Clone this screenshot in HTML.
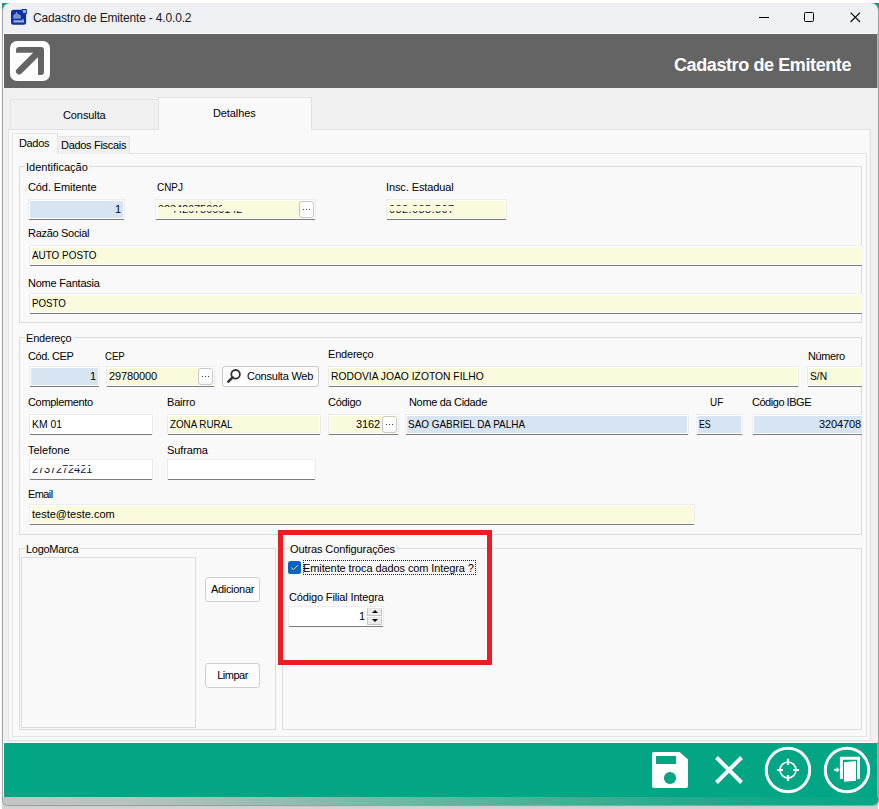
<!DOCTYPE html>
<html><head><meta charset="utf-8">
<style>
*{margin:0;padding:0;box-sizing:border-box}
html,body{width:879px;height:809px;overflow:hidden;background:#fff;font-family:"Liberation Sans",sans-serif;font-size:11px;color:#000;position:relative;letter-spacing:-0.1px}
.a{position:absolute}
.lbl{position:absolute;white-space:nowrap;font-size:11px;line-height:13px;color:#000}
.fld{position:absolute;height:19px;border:1px solid #fff;box-shadow:0 1px 0 #7d7d7d,0 0 0 1px #ececec;background:#fff;font-size:11px;line-height:17px;padding:0 2px 0 1px;white-space:nowrap;overflow:hidden}
.y{background:#fafadc}
.b{background:#d7e4f2}
.r{text-align:right}
.cr{border-right:none;box-shadow:0 1px 0 #7d7d7d,-1px 0 0 #ececec,0 -1px 0 #ececec}
.mk{position:absolute}
.grp{position:absolute;border:1px solid #dcdcdc}
.gl{position:absolute;background:#f9f9f9;padding:0 1px;line-height:13px;white-space:nowrap}
.dots{position:absolute;width:15px;height:17px;border:1px solid #c8c8c8;border-radius:3px;background:#fdfdfd}.dots::before{content:"";position:absolute;left:2.75px;top:6.75px;width:1.5px;height:1.5px;border-radius:0.5px;background:#000;box-shadow:3px 0 0 #000,6px 0 0 #000}
.btn{position:absolute;border:1px solid #d0d0d0;border-radius:3px;background:#fdfdfd;text-align:center;white-space:nowrap}
</style></head><body>
<!-- window -->
<div class="a" style="left:2px;top:3px;width:876px;height:806px;background:#d2d2d2"></div>
<div class="a" style="left:2px;top:3px;width:877px;height:802px;background:#f0f0f0;border-left:1px solid #a6a6a6;border-right:1px solid #a0a0a0;border-radius:0 0 6px 6px;box-shadow:0 1px 1px #9a9a9a"></div>
<!-- green corners -->
<div class="a" style="left:2px;top:3px;width:9px;height:9px;background:#159a78"></div>
<div class="a" style="left:870px;top:3px;width:9px;height:9px;background:#159a78"></div>
<!-- title bar -->
<div class="a" style="left:2px;top:3px;width:877px;height:31px;background:#eff0f3;border-radius:8px 8px 0 0;border-left:1px solid #a6a6a6;border-right:1px solid #a0a0a0"></div>
<svg class="a" style="left:10px;top:8px" width="18" height="18" viewBox="0 0 18 18">
 <rect x="1" y="1.8" width="15.1" height="15" rx="2.5" fill="#0b30a3"/>
 <rect x="11.9" y="1" width="5" height="5" rx="0.6" fill="#0b30a3"/>
 <rect x="12.9" y="2" width="3" height="3" fill="#9fb1e2"/>
 <path d="M3.2 10.8V7.6L5.6 5.6L6.6 3.4L7.6 5.6L10.8 7.6V10.8Z" fill="#7c90d0"/>
 <path d="M3.4 12.3H14V14.5H3.4Z" fill="#a2b3e3"/>
 <path d="M11.5 12.3L13 10.8L14 12.3" fill="#a2b3e3"/>
</svg>
<div class="lbl" style="left:33px;top:11px;font-size:12px;line-height:14px;letter-spacing:-0.17px;color:#1a1a1a">Cadastro de Emitente - 4.0.0.2</div>
<!-- window controls -->
<div class="a" style="left:759px;top:17px;width:10px;height:1px;background:#000"></div>
<div class="a" style="left:804px;top:12px;width:10px;height:10px;border:1px solid #000;border-radius:1.5px"></div>
<svg class="a" style="left:850px;top:12px" width="11" height="11" viewBox="0 0 11 11"><path d="M0.6 0.6L10 10M10 0.6L0.6 10" stroke="#000" stroke-width="1.1"/></svg>
<!-- dark header -->
<div class="a" style="left:3px;top:33px;width:874px;height:55px;background:#fff"></div>
<div class="a" style="left:877px;top:33px;width:1px;height:55px;background:#b4b4b4"></div>
<div class="a" style="left:4px;top:34px;width:873px;height:54px;background:#646464"></div>
<svg class="a" style="left:10px;top:41px" width="40" height="40" viewBox="0 0 40 40">
 <rect x="0" y="0" width="40" height="40" rx="7" fill="#fdfdfd"/>
 <path d="M9 6H31A3 3 0 0 1 34 9V31A3 3 0 0 1 31 34H28V11.7H6V9A3 3 0 0 1 9 6Z" fill="#646464"/>
 <path d="M29.6 9.9L9.2 30.3" stroke="#646464" stroke-width="6.5" fill="none" stroke-linecap="round"/>
</svg>
<div class="a" style="left:674px;top:55px;font-weight:bold;font-size:18px;line-height:20px;color:#fff;letter-spacing:-0.4px;white-space:nowrap">Cadastro de Emitente</div>

<!-- outer tabs -->
<div class="a" style="left:10px;top:99px;width:149px;height:31px;background:#f0f0f0;border:1px solid #e3e3e3;border-bottom:none"></div>
<div class="lbl" style="left:63px;top:109px">Consulta</div>
<div class="a" style="left:8px;top:129px;width:863px;height:612px;background:#f9f9f9;border:1px solid #e3e3e3;box-shadow:inset -1px 0 0 #f3f3f3"></div>
<div class="a" style="left:158px;top:97px;width:154px;height:33px;background:#f9f9f9;border:1px solid #e0e0e0;border-bottom:none"></div>
<div class="lbl" style="left:213px;top:107px">Detalhes</div>

<!-- inner tabs -->
<div class="a" style="left:12px;top:153px;width:855px;height:584px;background:#f9f9f9;border:1px solid #e4e4e4"></div>
<div class="a" style="left:57px;top:136px;width:73px;height:18px;background:#f0f0f0;border:1px solid #e3e3e3;border-bottom:none"></div>
<div class="lbl" style="left:61px;top:139px;letter-spacing:-0.3px">Dados Fiscais</div>
<div class="a" style="left:12px;top:133px;width:46px;height:21px;background:#f9f9f9;border:1px solid #e4e4e4;border-bottom:none"></div>
<div class="lbl" style="left:19px;top:137px;letter-spacing:-0.35px">Dados</div>

<!-- Identificacao group -->
<div class="grp" style="left:19px;top:166px;width:843px;height:157px"></div>
<div class="gl" style="left:25px;top:161px;letter-spacing:0px">Identificação</div>
<div class="lbl" style="left:28px;top:181px">Cód. Emitente</div>
<div class="fld b r" style="left:29px;top:200px;width:95px">1</div>
<div class="lbl" style="left:157px;top:181px;letter-spacing:0"><span style="display:inline-block;transform:scaleX(0.9);transform-origin:0 0">CNPJ</span></div>
<div class="fld y" style="left:156px;top:200px;width:159px;color:#10103a">02342675000142<i class="mk" style="left:0;top:6px;width:17px;height:10px;background:#fafadc"></i><i class="mk" style="left:0;top:6px;width:140px;height:4px;background:#fafadc"></i><i class="mk" style="left:65px;top:0;width:90px;height:10px;background:#fafadc"></i></div>
<div class="dots" style="left:299px;top:201px"></div>
<div class="lbl" style="left:386px;top:181px">Insc. Estadual</div>
<div class="fld y" style="left:387px;top:200px;width:119px;color:#10103a;letter-spacing:0.4px">082.085.507<i class="mk" style="left:0;top:5px;width:110px;height:5px;background:#fafadc"></i></div>
<div class="lbl" style="left:28px;top:227px;letter-spacing:-0.3px">Razão Social</div>
<div class="fld y cr" style="left:30px;top:246px;width:832px;letter-spacing:0"><span style="display:inline-block;transform:scaleX(0.9);transform-origin:0 0">AUTO POSTO</span></div>
<div class="lbl" style="left:28px;top:277px;letter-spacing:-0.22px">Nome Fantasia</div>
<div class="fld y cr" style="left:30px;top:294px;width:832px;letter-spacing:0"><span style="display:inline-block;transform:scaleX(0.885);transform-origin:0 0">POSTO</span></div>

<!-- Endereco group -->
<div class="grp" style="left:19px;top:337px;width:843px;height:198px"></div>
<div class="gl" style="left:25px;top:332px;letter-spacing:-0.2px">Endereço</div>
<div class="lbl" style="left:28px;top:350px;letter-spacing:-0.44px">Cód. CEP</div>
<div class="fld b r" style="left:30px;top:367px;width:69px">1</div>
<div class="lbl" style="left:105px;top:350px;letter-spacing:0"><span style="display:inline-block;transform:scaleX(0.87);transform-origin:0 0">CEP</span></div>
<div class="fld y" style="left:107px;top:367px;width:107px">29780000</div>
<div class="dots" style="left:198px;top:368px"></div>
<div class="btn" style="left:222px;top:366px;width:97px;height:21px;border-color:#cacaca"></div>
<svg class="a" style="left:222px;top:366px" width="22" height="22" viewBox="0 0 22 22"><circle cx="13.6" cy="8.3" r="4.3" stroke="#333" stroke-width="1.8" fill="none"/><path d="M10.6 11.3L6.3 15.6" stroke="#333" stroke-width="2.6" stroke-linecap="round"/></svg>
<div class="lbl" style="left:247px;top:370px;letter-spacing:-0.23px">Consulta Web</div>
<div class="lbl" style="left:328px;top:348px;letter-spacing:-0.2px">Endereço</div>
<div class="fld y" style="left:329px;top:367px;width:469px;letter-spacing:0"><span style="display:inline-block;transform:scaleX(0.937);transform-origin:0 0">RODOVIA JOAO IZOTON FILHO</span></div>
<div class="lbl" style="left:808px;top:350px;letter-spacing:-0.4px">Número</div>
<div class="fld y cr" style="left:808px;top:367px;width:54px;border-right:none;letter-spacing:0"><span style="display:inline-block;transform:scaleX(0.93);transform-origin:0 0">S/N</span></div>
<div class="lbl" style="left:28px;top:396px;letter-spacing:-0.33px">Complemento</div>
<div class="fld" style="left:30px;top:415px;width:122px;letter-spacing:0"><span style="display:inline-block;transform:scaleX(0.94);transform-origin:0 0">KM 01</span></div>
<div class="lbl" style="left:167px;top:396px;letter-spacing:-0.2px">Bairro</div>
<div class="fld y" style="left:168px;top:415px;width:152px;letter-spacing:0"><span style="display:inline-block;transform:scaleX(0.89);transform-origin:0 0">ZONA RURAL</span></div>
<div class="lbl" style="left:328px;top:396px;letter-spacing:-0.3px">Código</div>
<div class="fld y r" style="left:329px;top:415px;width:69px;padding-right:17px">3162</div>
<div class="dots" style="left:382px;top:416px"></div>
<div class="lbl" style="left:409px;top:396px;letter-spacing:-0.33px">Nome da Cidade</div>
<div class="fld b" style="left:406px;top:415px;width:282px;letter-spacing:0"><span style="display:inline-block;transform:scaleX(0.903);transform-origin:0 0">SAO GABRIEL DA PALHA</span></div>
<div class="lbl" style="left:710px;top:396px;letter-spacing:0"><span style="display:inline-block;transform:scaleX(0.9);transform-origin:0 0">UF</span></div>
<div class="fld b" style="left:697px;top:415px;width:45px;letter-spacing:0"><span style="display:inline-block;transform:scaleX(0.8);transform-origin:0 0">ES</span></div>
<div class="lbl" style="left:752px;top:396px;letter-spacing:-0.47px">Código IBGE</div>
<div class="fld b r cr" style="left:753px;top:415px;width:109px;padding-right:1px;letter-spacing:-0.13px">3204708</div>
<div class="lbl" style="left:28px;top:444px;letter-spacing:0px">Telefone</div>
<div class="fld" style="left:30px;top:460px;width:122px;color:#10103a">2737272421<i class="mk" style="left:0;top:0;width:31px;height:7px;background:#fff"></i><i class="mk" style="left:31px;top:5px;width:80px;height:2px;background:#fff"></i></div>
<div class="lbl" style="left:167px;top:444px;letter-spacing:-0.1px">Suframa</div>
<div class="fld" style="left:168px;top:460px;width:147px"></div>
<div class="lbl" style="left:28px;top:488px;letter-spacing:-0.6px">Email</div>
<div class="fld y" style="left:30px;top:505px;width:664px;letter-spacing:0px">teste@teste.com</div>

<!-- LogoMarca group -->
<div class="grp" style="left:19px;top:548px;width:257px;height:182px"></div>
<div class="gl" style="left:25px;top:543px;letter-spacing:-0.3px">LogoMarca</div>
<div class="a" style="left:21px;top:557px;width:175px;height:171px;border:1px solid #dcdcdc"></div>
<div class="btn" style="left:205px;top:577px;width:55px;height:25px;line-height:23px;letter-spacing:-0.3px">Adicionar</div>
<div class="btn" style="left:205px;top:663px;width:55px;height:25px;line-height:23px;letter-spacing:-0.5px">Limpar</div>

<!-- Outras configs group -->
<div class="grp" style="left:282px;top:548px;width:580px;height:182px"></div>
<div class="gl" style="left:289px;top:543px">Outras Configurações</div>
<div class="a" style="left:288px;top:561px;width:13px;height:13px;background:#0b62c1;border-radius:2.5px"></div>
<svg class="a" style="left:288px;top:561px" width="13" height="13" viewBox="0 0 13 13"><path d="M3.3 6.6L5.5 8.6L9.8 4.3" stroke="#dce8f8" stroke-width="1" fill="none"/></svg>
<div class="a" style="left:303px;top:560px;width:173px;height:15px;border:1px dotted #222"></div>
<div class="lbl" style="left:303px;top:562px">Emitente troca dados com Integra ?</div>
<div class="lbl" style="left:289px;top:591px;letter-spacing:-0.15px">Código Filial Integra</div>
<div class="fld r" style="left:289px;top:607px;width:94px;padding-right:17px">1</div>
<div class="a" style="left:367px;top:608px;width:15px;height:8px;background:#ececec;border:1px solid #c4c4c4;border-top-color:#e4e4e4"></div><div class="a" style="left:372px;top:610px;width:0;height:0;border-left:3px solid transparent;border-right:3px solid transparent;border-bottom:3px solid #000"></div>
<div class="a" style="left:367px;top:617px;width:15px;height:8px;background:#ececec;border:1px solid #c4c4c4;border-top-color:#e4e4e4"></div><div class="a" style="left:372px;top:619px;width:0;height:0;border-left:3px solid transparent;border-right:3px solid transparent;border-top:3px solid #000"></div>
<!-- red box -->
<div class="a" style="left:278px;top:530px;width:214px;height:135px;border:5px solid #ed1c24"></div>

<!-- footer -->
<div class="a" style="left:3px;top:742px;width:874px;height:56px;background:#fff"></div>
<div class="a" style="left:877px;top:742px;width:1px;height:62px;background:#aaa6a6"></div>
<div class="a" style="left:4px;top:743px;width:873px;height:54px;background:#03a684"></div>
<div class="a" style="left:3px;top:797px;width:875px;height:8px;background:linear-gradient(90deg,#c3c5c4 0px,#b8c3bf 120px,#94bcb0 280px,#62b59f 440px,#33ad8f 620px,#0ea887 780px,#06a785 874px);border-radius:0 0 5px 5px"></div>
<svg class="a" style="left:652px;top:752px" width="36" height="36" viewBox="0 0 36 36">
 <path d="M2 0H27.6L36 7.5V34a2 2 0 0 1-2 2H2a2 2 0 0 1-2-2V2a2 2 0 0 1 2-2z" fill="#fff"/>
 <rect x="4" y="4" width="20" height="8" fill="#03a684"/>
 <circle cx="18" cy="26" r="6.1" fill="#03a684"/>
</svg>
<svg class="a" style="left:714px;top:755px" width="30" height="30" viewBox="0 0 30 30"><path d="M2.5 2.5L27.5 27.5M27.5 2.5L2.5 27.5" stroke="#fff" stroke-width="4"/></svg>
<svg class="a" style="left:764px;top:746px" width="48" height="48" viewBox="0 0 48 48">
 <circle cx="24" cy="24" r="21.7" stroke="#fff" stroke-width="3" fill="none"/>
 <circle cx="24" cy="24" r="8" stroke="#fff" stroke-width="1.6" fill="none"/>
 <path d="M24 12.8V19M24 29V35M12.9 24H19M29 24H35.1" stroke="#fff" stroke-width="2.2"/>
</svg>
<svg class="a" style="left:823px;top:746px" width="48" height="48" viewBox="0 0 48 48">
 <circle cx="24" cy="24" r="21.7" stroke="#fff" stroke-width="3" fill="none"/>
 <path d="M18.4 33V12.3H35.5V33" stroke="#fff" stroke-width="3" fill="none"/>
 <path d="M21 16.3L33 14.9V34.7L21 35.7z" fill="#fff"/>
 <path d="M11.1 23.8H15" stroke="#fff" stroke-width="2"/>
 <path d="M13.6 21L16.6 23.8L13.6 26.8z" fill="#fff"/>
</svg>
</body></html>
